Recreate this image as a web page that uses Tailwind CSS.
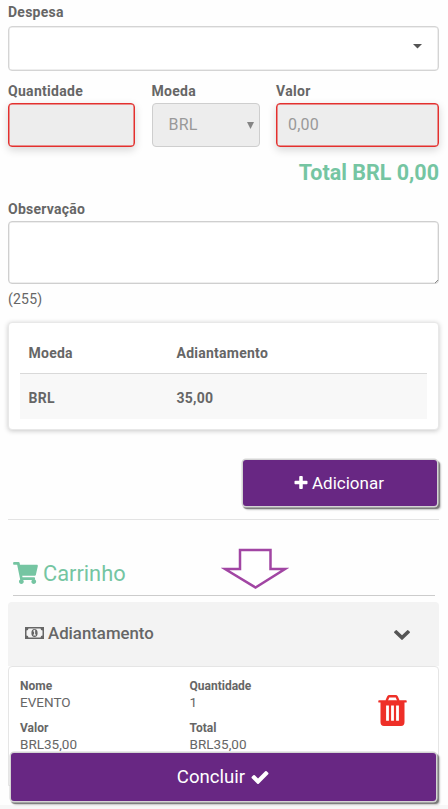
<!DOCTYPE html>
<html lang="pt-BR">
<head>
<meta charset="utf-8">
<title>Despesa</title>
<script src="https://cdn.jsdelivr.net/npm/@tailwindcss/browser@4"></script>
</head>
<body class="bg-white">
<main class="relative h-[809px] w-[448px] overflow-hidden bg-[#fefefe] pl-2 pr-[9px] font-[Roboto,sans-serif] text-sm leading-5 text-[#666]">
  <label class="block pt-[2px] font-bold tracking-[0.250px]">Despesa</label>
  <div class="mt-[4px] flex h-[45px] items-center justify-end rounded border border-[#d4d4d4] bg-white pr-4 shadow-[inset_0_0_0_0.500px_#ddd]">
    <svg class="mb-[5px] h-[5px] w-[9px]" viewBox="0 0 9 5"><path fill="#555" d="M0 0h9L4.500 4.500z"/></svg>
  </div>

  <div class="mt-2.5 grid grid-cols-[127px_108px_163px] gap-x-[16.500px]">
    <div>
      <label class="block font-bold tracking-[0.3px]">Quantidade</label>
      <div class="mt-[2px] h-11 rounded border border-[#e4302e] bg-[#ededed] shadow-[inset_0_0_0_0.500px_#e4302e,0_3px_8px_rgba(0,0,0,0.16)]"></div>
    </div>
    <div>
      <label class="block font-bold tracking-[0.3px]">Moeda</label>
      <div class="mt-[2px] flex h-11 items-center justify-between rounded border border-[#cecece] bg-[#ededed] pl-4 pr-[5px] text-base tracking-[0.2px] text-[#999]">
        <span>BRL</span>
        <svg class="h-[7px] w-[7px]" viewBox="0 0 7 7"><path fill="#858585" d="M0 0h7L3.500 7z"/></svg>
      </div>
    </div>
    <div>
      <label class="block font-bold tracking-[0.3px]">Valor</label>
      <div class="mt-[2px] flex h-11 items-center rounded border border-[#e4302e] bg-[#ededed] pl-[11px] text-base tracking-[0.2px] text-[#999] shadow-[inset_0_0_0_0.500px_#e4302e,0_3px_8px_rgba(0,0,0,0.16)]">0,00</div>
    </div>
  </div>

  <div class="mt-[12px] text-right text-[21.500px] font-bold leading-7 text-[#75c5a2]">Total BRL 0,00</div>

  <label class="mt-[12px] block font-bold tracking-[0.250px]">Observação</label>
  <div class="relative mt-[2px] h-[63px] rounded border border-[#cfcfcf] bg-white shadow-[inset_0_0_0_0.500px_#ddd]">
    <svg class="absolute bottom-0 right-0 size-[3px]" viewBox="0 0 3 3"><path stroke="#888" d="M0 3L3 0"/></svg>
  </div>
  <div class="mt-[5px] tracking-[0.2px]">(255)</div>

  <section class="mt-[13px] h-[108px] rounded-sm border border-[#e8e8e8] bg-white px-[11px] pt-[10px] font-bold tracking-[0.250px] shadow-[0_1px_5px_rgba(0,0,0,0.22)]">
    <div class="grid h-[41px] grid-cols-[148px_1fr] items-center border-b-[1.5px] border-[#d9d9d9] pl-[8.500px]"><span>Moeda</span><span>Adiantamento</span></div>
    <div class="grid h-[45px] grid-cols-[148px_1fr] items-center bg-[#f8f8f8] pl-[8.500px] pt-[3px]"><span>BRL</span><span>35,00</span></div>
  </section>

  <div class="mt-[30px] flex justify-end pr-[2px]">
    <div class="flex h-[46px] w-[194px] items-center justify-center gap-1 rounded-[3px] bg-[#682783] pb-px pr-[2px] text-[17px] text-white shadow-[0_0_0_1.5px_#d4d4d4,1.5px_2px_1px_1px_#777,3px_3px_2px_1px_#ccc]">
      <svg class="h-[13px] w-[14px]" viewBox="192 128 1408 1408"><path fill="currentColor" d="M1600 736v192q0 40-28 68t-68 28h-416v416q0 40-28 68t-68 28h-192q-40 0-68-28t-28-68v-416h-416q-40 0-68-28t-28-68v-192q0-40 28-68t68-28h416v-416q0-40 28-68t68-28h192q40 0 68 28t28 68v416h416q40 0 68 28t28 68z"/></svg>
      <span>Adicionar</span>
    </div>
  </div>
  <hr class="mt-[13px] border-[#e3e3e3]">

  <div class="ml-[5px] mr-1 mt-[26px] flex h-[50px] border-b border-[#ccc] text-[#75c5a2]">
    <svg class="mt-4 h-[22px] w-[25px]" viewBox="0 0 576 512"><path fill="currentColor" d="M528.12 301.319l47.273-208C578.806 78.301 567.391 64 551.99 64H159.208l-9.166-44.81C147.758 8.021 137.93 0 126.529 0H24C10.745 0 0 10.745 0 24v16c0 13.255 10.745 24 24 24h69.883l70.248 343.435C147.325 417.1 136 435.222 136 456c0 30.928 25.072 56 56 56s56-25.072 56-56c0-15.674-6.447-29.835-16.824-40h209.647C430.447 426.165 424 440.326 424 456c0 30.928 25.072 56 56 56s56-25.072 56-56c0-22.172-12.888-41.332-31.579-50.405l5.517-24.276c3.413-15.018-8.002-29.319-23.403-29.319H218.117l-6.545-32h293.145c11.206 0 20.92-7.754 23.403-18.681z"/></svg>
    <span class="ml-[5px] mt-3 w-[84px] text-[21.800px] leading-8">Carrinho</span>
    <svg class="ml-[94px] mt-px h-[43px] w-[68px]" viewBox="0 0 68 43"><path d="M19 3h30.500v19H64L34.500 40.500 4 22h15z" fill="#fff" stroke="#a145a3" stroke-width="2.500"/></svg>
  </div>

  <section class="mt-[6px]">
    <div class="flex h-[64px] items-center rounded-t bg-[#f3f3f3] pb-[2px] pl-[17px] pr-[29px]">
      <svg class="h-[12px] w-[19px]" viewBox="0 0 19 12"><path fill="#666" fill-rule="evenodd" d="M0 0h19v12H0zM3.500 1.500a2.200 2.200 0 0 1-2 2v5a2.200 2.200 0 0 1 2 2h12a2.200 2.200 0 0 1 2-2v-5a2.200 2.200 0 0 1-2-2z"/><ellipse cx="9.500" cy="6" rx="3.100" ry="3.900" fill="#666"/><path d="M8.300 4.300l1.300-.8v4.200M8.200 8h2.800" fill="none" stroke="#f3f3f3" stroke-width="1.100"/></svg>
      <span class="ml-1 text-[16.800px] font-medium">Adiantamento</span>
      <svg class="ml-auto mt-[3px] h-[10px] w-[16px]" viewBox="90 533 1612 1035" preserveAspectRatio="none"><path fill="#555" d="M1683 808l-742 741q-19 19-45 19t-45-19l-742-741q-19-19-19-45.500t19-45.500l166-165q19-19 45-19t45 19l531 531 531-531q19-19 45-19t45 19l166 165q19 19 19 45.500t-19 45.500z"/></svg>
    </div>
    <div class="flex h-[120px] rounded-t border border-[#e5e5e5] bg-white pl-[11px] pt-[11px]">
      <div class="grid grid-cols-[169.500px_188.500px] grid-rows-[42px_42px] text-[13.500px] leading-[16px]">
        <div><div class="text-xs font-bold leading-[16px]">Nome</div>EVENTO</div>
        <div><div class="text-xs font-bold leading-[16px]">Quantidade</div>1</div>
        <div><div class="text-xs font-bold leading-[16px]">Valor</div>BRL35,00</div>
        <div><div class="text-xs font-bold leading-[16px]">Total</div>BRL35,00</div>
      </div>
      <svg class="mt-[17px] h-[31px] w-[29px] shrink-0" viewBox="0 0 29 31"><path d="M8.500 6l1.700-4q.4-.8 1.300-.8h6q.9 0 1.300.8l1.700 4" fill="none" stroke="#ee2f28" stroke-width="2.400"/><path fill="#ee2f28" d="M1 5.200h27q.7 0 .7.700v1q0 .7-.7.700h-1.500V27q0 4-3.500 4H6q-3.500 0-3.500-4V7.600H1q-.7 0-.7-.7v-1q0-.7.700-.7z"/><path stroke="#fff" stroke-width="2.800" d="M9.500 10.500v15.300M14.500 10.500v15.300M19.500 10.500v15.300"/></svg>
    </div>
  </section>

  <div class="absolute bottom-0 left-0 h-[4px] w-full bg-[#f7f7f7]"></div>
  <div class="absolute left-[11px] top-[753px] flex h-[48px] w-[425px] items-center justify-center gap-[6px] rounded-[3px] bg-[#682783] pr-px text-[18.600px] text-white shadow-[0_0_0_1.5px_#d4d4d4,1.5px_2px_1px_1px_#777,3px_3px_2px_1px_#ccc]">
    <span>Concluir</span>
    <svg class="mt-px h-[13px] w-[18px]" viewBox="121 334 1550 1188"><path fill="currentColor" d="M1671 566q0 40-28 68l-724 724-136 136q-28 28-68 28t-68-28l-136-136-362-362q-28-28-28-68t28-68l136-136q28-28 68-28t68 28l294 295 656-657q28-28 68-28t68 28l136 136q28 28 28 68z"/></svg>
  </div>
</main>
</body>
</html>
